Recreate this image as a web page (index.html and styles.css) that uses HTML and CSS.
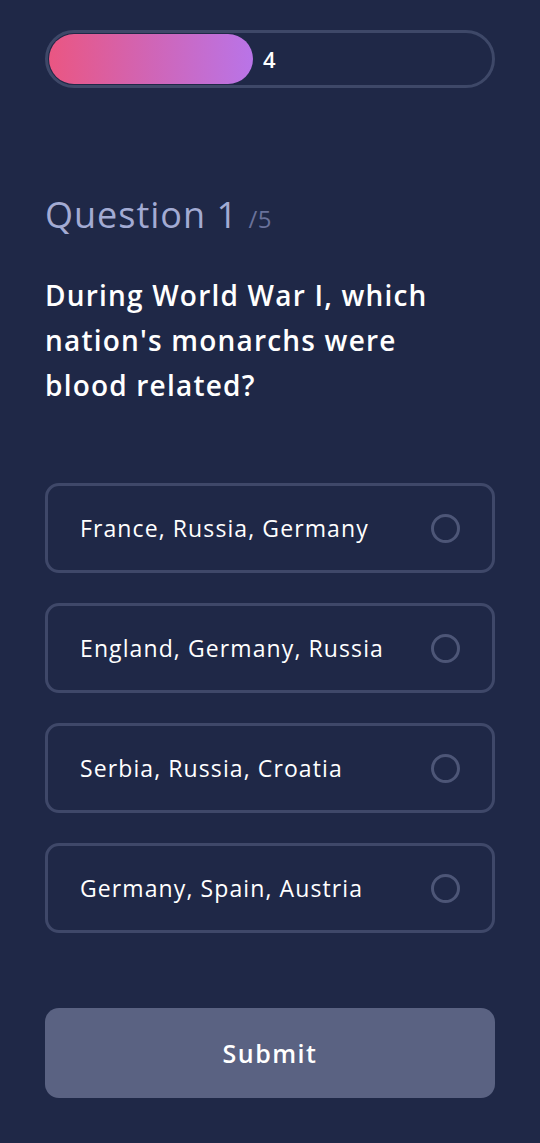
FILE: index.html
```html
<!DOCTYPE html>
<html>
<head>
<meta charset="utf-8">
<link rel="stylesheet" href="styles.css">
</head>
<body>
<main class="page">
  <div class="progress">
    <div class="progress-fill"></div>
    <span class="progress-count">4</span>
  </div>
  <h2 class="q-title">Question 1 <span class="q-total">/5</span></h2>
  <p class="q-text">During World War I, which nation's monarchs were blood related?</p>
  <div class="options">
    <div class="option"><span>France, Russia, Germany</span><span class="radio"></span></div>
    <div class="option"><span>England, Germany, Russia</span><span class="radio"></span></div>
    <div class="option"><span>Serbia, Russia, Croatia</span><span class="radio"></span></div>
    <div class="option"><span>Germany, Spain, Austria</span><span class="radio"></span></div>
  </div>
  <button class="submit">Submit</button>
</main>
</body>
</html>
```
FILE: styles.css
```css
html, body {
  margin: 0;
  padding: 0;
  background: #1f2847;
}
body {
  font-family: "Open Sans", "DejaVu Sans", sans-serif;
  color: #ffffff;
}
.page {
  width: 540px;
  height: 1143px;
  box-sizing: border-box;
  padding: 30px 45px 0 45px;
  display: flex;
  flex-direction: column;
}
.progress {
  height: 58px;
  box-sizing: border-box;
  border: 3px solid #3e4868;
  border-radius: 29px;
  padding: 1px;
  display: flex;
  align-items: center;
  gap: 10px;
}
.progress-fill {
  width: 204px;
  height: 50px;
  border-radius: 25px;
  background: linear-gradient(90deg, #ea5682 0%, #d065b6 50%, #b974e8 100%);
}
.progress-count {
  font-size: 22px;
  font-weight: 600;
  color: #ffffff;
}
.q-title {
  margin: 105px 0 0 0;
  font-size: 36px;
  line-height: 44px;
  font-weight: 500;
  color: #a3abd3;
  letter-spacing: 1px;
}
.q-total {
  font-size: 24px;
  color: #69719a;
  font-weight: 500;
  letter-spacing: 0.5px;
}
.q-text {
  margin: 32px 0 0 0;
  font-size: 28px;
  line-height: 45px;
  font-weight: 600;
  color: #ffffff;
  width: 420px;
  letter-spacing: 1.2px;
}
.options {
  margin-top: 75px;
  display: flex;
  flex-direction: column;
  gap: 30px;
}
.option {
  height: 90px;
  box-sizing: border-box;
  border: 3px solid #3f4869;
  border-radius: 14px;
  padding: 0 32px 0 32px;
  display: flex;
  align-items: center;
  justify-content: space-between;
  font-size: 23px;
  letter-spacing: 1.1px;
  color: #ffffff;
}
.radio {
  width: 29px;
  height: 29px;
  box-sizing: border-box;
  border: 3px solid #4d5677;
  border-radius: 50%;
}
.submit {
  margin-top: 75px;
  height: 90px;
  border: none;
  border-radius: 14px;
  background: #5a6282;
  color: #ffffff;
  font-family: inherit;
  font-size: 25px;
  font-weight: 600;
  letter-spacing: 1.5px;
}
```
